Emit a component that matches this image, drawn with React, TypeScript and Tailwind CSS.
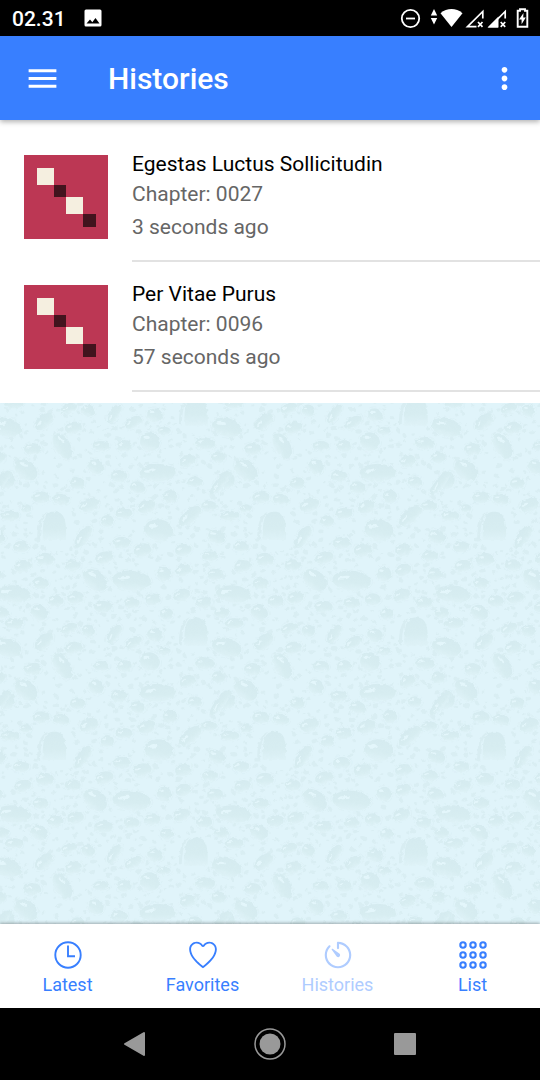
import React from "react";
import { IoIosHeartEmpty, IoIosTimer, IoMdMenu, IoMdMore } from "react-icons/io";

type Stone = [cx: number, cy: number, rx: number, ry: number, angle: number];

const TILE = 660;

const stones: Stone[] = [
  [20, 112, 45, 28, 15], [132, 95, 32, 20, -40], [220, 113, 26, 18, -10], [207, 55, 26, 15, -20],
  [265, 62, 20, 18, 20], [343, 72, 32, 16, -55], [400, 97, 28, 16, -30], [465, 75, 24, 20, 20],
  [450, 155, 30, 28, 20], [492, 122, 20, 12, 0], [615, 160, 30, 18, 5], [187, 168, 42, 24, 60],
  [98, 177, 26, 18, 0], [303, 168, 25, 15, 0], [373, 168, 22, 18, 0], [78, 240, 38, 28, 40],
  [288, 230, 24, 22, 30], [473, 248, 54, 27, 0], [563, 213, 24, 18, -20], [655, 202, 20, 18, 0],
  [20, 270, 24, 28, 0], [357, 258, 25, 18, 0], [232, 280, 22, 18, 0], [413, 292, 24, 18, 10],
  [585, 275, 22, 16, 0], [660, 280, 45, 14, -50], [123, 322, 26, 18, 0], [183, 328, 25, 16, 10],
  [268, 345, 30, 20, -20], [510, 320, 22, 20, 0], [440, 350, 27, 20, -20], [372, 370, 25, 17, 0],
  [322, 393, 20, 18, 0], [30, 377, 28, 15, 0], [78, 355, 16, 12, 0], [627, 348, 24, 15, 0],
  [570, 378, 40, 20, -40], [477, 420, 43, 32, 10], [250, 440, 38, 18, -55], [650, 440, 26, 20, 20],
  [365, 458, 26, 18, 0], [63, 470, 24, 17, 0], [428, 480, 27, 20, -10], [550, 480, 25, 18, -10],
  [313, 503, 28, 18, -15], [135, 508, 27, 20, 0], [630, 497, 24, 16, 0], [218, 525, 24, 17, 0],
  [68, 528, 25, 18, -10], [492, 552, 22, 22, 20], [550, 540, 24, 18, -20], [645, 553, 24, 18, 0],
  [285, 570, 40, 28, 40], [395, 572, 58, 30, 5], [122, 580, 24, 17, 0], [40, 612, 52, 26, 5],
  [227, 623, 25, 18, -10], [167, 633, 24, 18, 0], [458, 628, 24, 18, 0], [545, 615, 26, 18, -20],
  [612, 637, 24, 18, 0], [310, 650, 28, 18, 0], [395, 638, 24, 16, 0], [118, 8, 27, 22, 30],
  [5, 8, 22, 16, 0], [42, 40, 28, 16, 0], [500, 12, 20, 18, 0],
];

const arches: [number, number][] = [[585, 65], [160, 408]];

function makePebbles(): Stone[] {
  let seed = 41;
  const next = () => {
    seed = (seed * 16807) % 2147483647;
    return seed / 2147483647;
  };
  const out: Stone[] = [];
  for (let i = 0; i < 1500 && out.length < 330; i++) {
    const x = next() * TILE;
    const y = next() * TILE;
    const r = 4 + next() * 7;
    const hit =
      stones.some(([cx, cy, rx, ry]) => Math.hypot((cx - x) / (rx + r), (cy - y) / (ry + r)) < 1) ||
      arches.some(([cx, cy]) => Math.hypot(cx - x, cy - y) < 58) ||
      out.some(([cx, cy, rx]) => Math.hypot(cx - x, cy - y) < rx + r);
    if (!hit) out.push([x, y, r, r * 0.65, next() * 120 - 60]);
  }
  return out;
}

const pebbles = makePebbles();

function Pebbled() {
  const shape = ([cx, cy, rx, ry, a]: Stone, key: string) => (
    <g key={key} transform={`translate(${cx} ${cy}) rotate(${a})`}>
      <ellipse rx={rx + 5} ry={ry + 4} fill="none" stroke="#daeff4" strokeWidth="2" strokeDasharray="22 9 6 12" />
      <ellipse rx={rx} ry={ry} fill="url(#stone)" />
      <ellipse cx={-rx * 0.38} cy={-ry * 0.42} rx={rx * 0.32} ry={ry * 0.17} transform="rotate(-14)" fill="#e3f6fb" />
    </g>
  );
  const wrapped = stones.flatMap((s) => {
    const copies: Stone[] = [s];
    const dx = s[0] < 65 ? TILE : s[0] > TILE - 65 ? -TILE : 0;
    const dy = s[1] < 50 ? TILE : s[1] > TILE - 50 ? -TILE : 0;
    if (dx) copies.push([s[0] + dx, s[1], s[2], s[3], s[4]]);
    if (dy) copies.push([s[0], s[1] + dy, s[2], s[3], s[4]]);
    return copies;
  });
  return (
    <svg className="absolute inset-0 h-full w-full" aria-hidden="true">
      <defs>
        <linearGradient id="stone" x1="0" y1="0" x2="0" y2="1">
          <stop offset="0" stopColor="#d5ebf0" />
          <stop offset="0.6" stopColor="#d7edf1" />
          <stop offset="1" stopColor="#def2f7" />
        </linearGradient>
        <filter id="rough" x="0" y="0" width="100%" height="100%">
          <feTurbulence type="fractalNoise" baseFrequency="0.3" numOctaves="1" seed="3" />
          <feDisplacementMap in="SourceGraphic" scale="4" xChannelSelector="R" yChannelSelector="G" />
        </filter>
        <pattern id="pebbled" width={TILE} height={TILE} patternUnits="userSpaceOnUse" patternTransform="translate(0 50) scale(0.33333)">
          <rect width={TILE} height={TILE} fill="#e0f4fa" />
          {pebbles.map(([x, y, rx, ry, a], i) => (
            <ellipse key={i} rx={rx} ry={ry} transform={`translate(${x} ${y}) rotate(${a})`} fill="#d9eef3" />
          ))}
          {wrapped.map((s, i) => shape(s, `s${i}`))}
          {arches.map(([x, y]) => (
            <g key={x} transform={`translate(${x} ${y})`}>
              <path d="M-32 42 C-32 0 -32 -38 -6 -42 C34 -48 40 -20 38 42Z" fill="url(#stone)" />
              <path d="M-48 38 C-48 0 -42 -34 -16 -43 C-34 -24 -38 0 -40 38Z" fill="#d8edf2" />
            </g>
          ))}
        </pattern>
      </defs>
      <rect width="100%" height="100%" fill="#e0f4fa" />
      <rect width="100%" height="100%" fill="url(#pebbled)" filter="url(#rough)" />
    </svg>
  );
}

function StatusBar() {
  return (
    <div className="flex h-9 items-center justify-between bg-black pl-3 pr-2 text-white">
      <div className="flex items-center gap-[18px]">
        <span className="pt-px text-[21px] leading-6 font-medium">02.31</span>
        <svg width="18" height="18" viewBox="0 0 18 18" aria-hidden="true">
          <path fillRule="evenodd" d="M2 .5h14A1.5 1.5 0 0 1 17.5 2v14a1.5 1.5 0 0 1-1.5 1.5H2A1.5 1.5 0 0 1 .5 16V2A1.5 1.5 0 0 1 2 .5zM2.5 14.5h13l-4-5.5-3.2 4.2-2.3-2.6z" fill="#fff" />
        </svg>
      </div>
      <svg width="132" height="24" viewBox="400 6 132 24" fill="#fff" aria-hidden="true">
        <circle cx="410.500" cy="18.500" r="8.700" fill="none" stroke="#fff" strokeWidth="1.800" />
        <path d="M406 17.600h9v1.800h-9z" />
        <path d="M430.800 15.500l3.200-6.500 3.200 6.500zM430.800 18h6.400l-3.200 6.500z" />
        <path d="M440.500 13.300C447 7.700 456 7.700 462.500 13.300L451.500 27z" />
        <path d="M482.800 18.500v-7L467.500 26.700h9" fill="none" stroke="#fff" strokeWidth="1.700" />
        <path d="M478 22l4.500 4.800m0-4.800l-4.500 4.800" stroke="#fff" strokeWidth="1.700" />
        <path d="M487.500 27.500L498.500 16.500V27.500z" />
        <path d="M505.200 18.500v-7L490 26.700h8" fill="none" stroke="#fff" strokeWidth="1.700" />
        <path d="M500.700 22l4.500 4.800m0-4.800l-4.500 4.800" stroke="#fff" strokeWidth="1.700" />
        <path d="M520 9.300V10.800H517.700V26.700H527.300V10.800H525V9.300z" fill="none" stroke="#fff" strokeWidth="1.900" />
        <path d="M523.500 13l-4.500 6.500h2.600v4.800l4.200-6.800h-2.600z" />
      </svg>
    </div>
  );
}

function Cover() {
  return (
    <svg className="my-[23px] shrink-0" width="84" height="84" viewBox="0 0 84 84" role="img" aria-label="Cover">
      <path fill="#bc3754" d="M0 0h84v84H0z" />
      <path fill="#f5efe0" d="M13 13h17v17H13zM42 42h17v17H42z" />
      <path fill="#42141e" d="M30 30h12v12H30zM59 59h13v13H59z" />
    </svg>
  );
}

const entries = [
  { title: "Egestas Luctus Sollicitudin", chapter: "Chapter: 0027", when: "3 seconds ago" },
  { title: "Per Vitae Purus", chapter: "Chapter: 0096", when: "57 seconds ago" },
];

function Clock() {
  return (
    <svg width="28" height="28" viewBox="0 0 28 28" fill="none" stroke="currentColor" strokeWidth="1.900" aria-hidden="true">
      <circle cx="14" cy="14" r="12.700" />
      <path d="M14 4.500v10.700h7" />
    </svg>
  );
}

function Keypad() {
  const at = [4, 14, 24];
  return (
    <svg width="28" height="28" viewBox="0 0 28 28" fill="none" stroke="currentColor" strokeWidth="2.100" aria-hidden="true">
      {at.map((y) => at.map((x) => <circle key={`${x}-${y}`} cx={x} cy={y} r="2.700" />))}
    </svg>
  );
}

const tabs = [
  { label: "Latest", icon: <Clock />, active: false },
  { label: "Favorites", icon: <IoIosHeartEmpty size={34} />, active: false },
  { label: "Histories", icon: <IoIosTimer size={34} />, active: true },
  { label: "List", icon: <Keypad />, active: false },
];

export default function App() {
  return (
    <div className="flex min-h-screen flex-col bg-white font-[Roboto,sans-serif]">
      <StatusBar />
      <header className="relative z-10 flex h-21 items-center bg-[#387fff] px-6 text-white shadow-[0_2px_5px_rgba(0,0,0,0.3)]">
        <button type="button" aria-label="Menu" className="flex w-9 justify-center">
          <IoMdMenu size={37} className="shrink-0" />
        </button>
        <h1 className="ml-12 flex-1 pt-0.5 text-[30px] leading-9 font-medium">Histories</h1>
        <button type="button" aria-label="More options" className="flex w-6 justify-center">
          <IoMdMore size={37} className="shrink-0" />
        </button>
      </header>
      <main className="relative flex-1">
        <Pebbled />
        <ul className="relative bg-white pt-3 pb-[11px]">
          {entries.map((e) => (
            <li key={e.title}>
              <a href="#chapter" className="flex gap-6 pl-6">
                <Cover />
                <div className="flex-1 border-b-2 border-[#e2e2e2] pt-[17px] text-[21px] leading-[30px] text-[#666]">
                  <h2 className="text-black">{e.title}</h2>
                  <p>{e.chapter}</p>
                  <p className="mt-[3px]">{e.when}</p>
                </div>
              </a>
            </li>
          ))}
        </ul>
      </main>
      <nav className="relative grid h-21 grid-cols-4 bg-white shadow-[0_-1px_3px_rgba(0,0,0,0.3)]">
        {tabs.map((t) => (
          <a
            key={t.label}
            href={`#${t.label.toLowerCase()}`}
            aria-current={t.active ? "page" : undefined}
            className={`flex flex-col items-center pt-[13px] text-lg leading-6 ${t.active ? "text-[#afccff]" : "text-[#387fff]"}`}
          >
            <span className="flex h-9 items-center">{t.icon}</span>
            {t.label}
          </a>
        ))}
      </nav>
      <div className="flex h-18 items-center justify-center gap-[103px] bg-black text-[#999]">
        <button type="button" aria-label="Back" className="flex w-8 justify-center">
          <svg width="24" height="26" viewBox="0 0 24 26" aria-hidden="true">
            <path d="M2 13L21 2v22z" fill="currentColor" stroke="currentColor" strokeWidth="2" strokeLinejoin="round" />
          </svg>
        </button>
        <button type="button" aria-label="Home" className="flex w-8 justify-center">
          <svg width="32" height="32" viewBox="0 0 32 32" aria-hidden="true">
            <circle cx="16" cy="16" r="15" fill="none" stroke="currentColor" strokeWidth="1.500" />
            <circle cx="16" cy="16" r="10.500" fill="currentColor" />
          </svg>
        </button>
        <button type="button" aria-label="Recent apps" className="flex w-8 justify-center">
          <svg width="24" height="24" viewBox="0 0 24 24" aria-hidden="true">
            <rect x="1" y="1" width="22" height="22" rx="1" fill="currentColor" />
          </svg>
        </button>
      </div>
    </div>
  );
}
